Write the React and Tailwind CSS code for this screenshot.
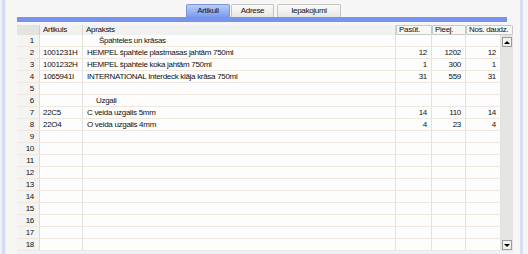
import React from "react";

const rows = [
  ["1", "", "Špahteles un krāsas", "", "", "", "g"],
  ["2", "1001231H", "HEMPEL špahtele plastmasas jahtām 750ml", "12", "1202", "12"],
  ["3", "1001232H", "HEMPEL špahtele koka jahtām 750ml", "1", "300", "1"],
  ["4", "1065941I", "INTERNATIONAL Interdeck klāja krāsa 750ml", "31", "559", "31"],
  ["5", "", "", "", "", ""],
  ["6", "", "Uzgaļi", "", "", "", "g2"],
  ["7", "22C5", "C veida uzgalis 5mm", "14", "110", "14"],
  ["8", "22O4", "O veida uzgalis 4mm", "4", "23", "4"],
];
for (let i = 9; i <= 18; i++) rows.push([String(i), "", "", "", "", ""]);

function Tab({ label, active, w }) {
  return (
    <div
      className={
        "h-[13px] flex items-center justify-center rounded-t-[2px] border border-b-0 " +
        (active
          ? "bg-gradient-to-b from-[#b9cdf6] to-[#7d9af0] border-[#7f95d8] text-[#0a1640]"
          : "bg-gradient-to-b from-[#fbfbfa] to-[#e6e6e2] border-[#c4c4c0] text-[#111]")
      }
      style={{ width: w }}
    >
      {label}
    </div>
  );
}

export default function App() {
  return (
    <div
      className="w-[528px] h-[254px] bg-[#f6f6f6] relative overflow-hidden flex text-[8px] leading-none tracking-[-0.3px] text-[#111]"
      style={{ fontFamily: '"Liberation Sans", Arial, sans-serif' }}
    >
      <div className="w-[6px] h-full flex">
        <div className="w-[2px] bg-[#eef0f6]" />
        <div className="w-[3px] bg-[#d3dcf0]" />
        <div className="w-[1px] bg-[#eceef4]" />
      </div>
      <div className="w-[11px]" />
      <div className="w-[496px] flex flex-col">
        <div className="h-[4px]" />
        <div className="flex h-[13px] pl-[169px] gap-[1px]">
          <Tab label="Artikuli" active w={44} />
          <Tab label="Adrese" w={43} />
          <div className="w-[1px]" />
          <Tab label="Iepakojumi" w={64} />
        </div>
        <div className="h-[5px] w-[490px] bg-[#7893ee]" />
        <div className="h-[3px]" />
        {/* header */}
        <div className="flex h-[10px] bg-[#f1f1ef]">
          <div className="w-[23px] bg-[#e3e3e0] border-r border-[#cfcfcc]" />
          <div className="w-[43px] border-r border-[#d6d6d2] pl-[3px] flex items-center">Artikuls</div>
          <div className="w-[313px] border-r border-[#d6d6d2] pl-[3px] flex items-center">Apraksts</div>
          <div className="w-[36px] border border-[#c8c8c4] rounded-[1px] pl-[2px] flex items-center bg-[#f7f7f5]">Pasūt.</div>
          <div className="w-[34px] border border-[#c8c8c4] rounded-[1px] pl-[2px] flex items-center bg-[#f7f7f5]">Pieej.</div>
          <div className="w-[47px] border border-[#c8c8c4] rounded-[1px] pl-[2px] flex items-center bg-[#f7f7f5]">Nos. daudz.</div>
        </div>
        <div className="flex flex-1 overflow-hidden">
          <div className="w-[484px] flex flex-col">
            {rows.map((r) => (
              <div key={r[0]} className="flex h-[12px] shrink-0 border-b border-[#f0e7df] bg-[#fdfdfd]">
                <div className="w-[23px] bg-[#f4f4f3] border-r border-[#dcdcd8] flex items-center justify-end pr-[5px]">{r[0]}</div>
                <div className="w-[43px] border-r border-[#e2e2de] flex items-center pl-[3px]">{r[1]}</div>
                <div
                  className={
                    "w-[313px] border-r border-[#e2e2de] flex items-center " +
                    (r[6] === "g" ? "pl-[16px]" : r[6] === "g2" ? "pl-[13px]" : "pl-[4px]")
                  }
                >
                  {r[2]}
                </div>
                <div className="w-[36px] border-r border-[#e2e2de] flex items-center justify-end pr-[4px]">{r[3]}</div>
                <div className="w-[34px] border-r border-[#e2e2de] flex items-center justify-end pr-[4px]">{r[4]}</div>
                <div className="w-[35px] border-r border-[#e2e2de] flex items-center justify-end pr-[4px]">{r[5]}</div>
              </div>
            ))}
          </div>
          <div className="w-[12px] bg-[#e5e5e1] flex flex-col justify-between pt-[2px] pb-[1px] pl-[1px]">
            <div className="w-[10px] h-[10px] bg-[#f2f2ef] border border-[#9a9a96] flex items-center justify-center">
              <div className="w-0 h-0 border-l-[3px] border-r-[3px] border-b-[3px] border-l-transparent border-r-transparent border-b-black" />
            </div>
            <div className="w-[10px] h-[10px] bg-[#f2f2ef] border border-[#9a9a96] flex items-center justify-center">
              <div className="w-0 h-0 border-l-[3px] border-r-[3px] border-t-[3px] border-l-transparent border-r-transparent border-t-black" />
            </div>
          </div>
        </div>
        <div className="h-[3px] bg-[#eef1f8]" />
      </div>
      <div className="w-[7px]" />
      <div className="w-[3px] bg-[#d6def2]" />
    </div>
  );
}
